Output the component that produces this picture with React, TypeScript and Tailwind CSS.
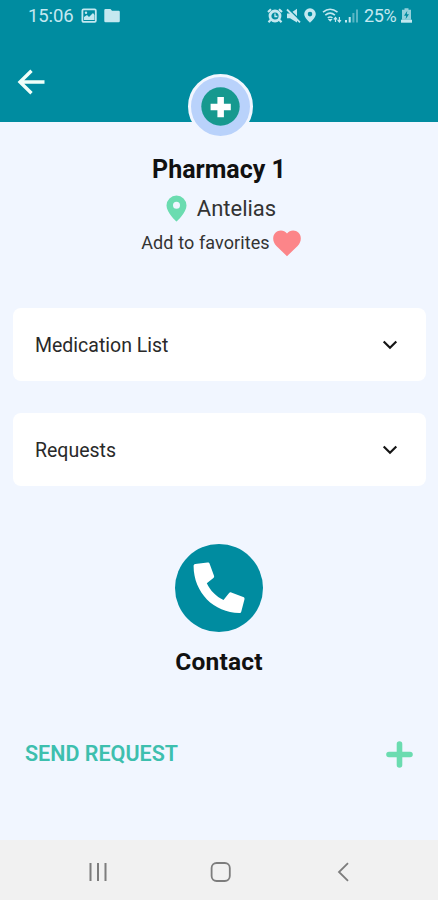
function StatusBar() {
  return (
    <div className="flex h-8 items-center pl-7 text-[#c4e8f0]">
      <span className="w-[53px] text-[18.5px] leading-8 tracking-[-0.1px]">15:06</span>
      <svg className="h-4 w-4" viewBox="0 0 16 16" fill="none">
        <rect x="1.4" y="1.3" width="13.4" height="12.6" rx="1.2" stroke="currentColor" strokeWidth="1.8" />
        <path d="M3 12V9l3-2 2 2 4-4 1.5 2v5z" fill="currentColor" />
        <circle cx="5" cy="4.8" r="1.2" fill="currentColor" />
      </svg>
      <svg className="ml-[7px] h-4 w-4" viewBox="0 0 16 16" fill="currentColor">
        <path d="M1.5 1h5L8 2.8h6.5A1.2 1.2 0 0 1 15.8 4v9a1.2 1.2 0 0 1-1.2 1.2H1.5A1.2 1.2 0 0 1 .3 13V2.2A1.2 1.2 0 0 1 1.5 1z" />
      </svg>

      <div className="ml-auto flex items-center pr-[26px]">
        {/* Alarm */}
        <svg className="h-4 w-4" viewBox="0 0 16 16" fill="none" stroke="currentColor">
          <path d="M1 4 4 1.3M15 4l-3-2.7" strokeWidth="2.2" />
          <circle cx="8" cy="8" r="5" strokeWidth="2.8" />
          <path d="M8 5.5v3h2.4" strokeWidth="1.3" />
          <path d="m4 11.5-2.5 2.7M12 11.5l2.5 2.7" strokeWidth="2.2" />
        </svg>
        {/* Muted */}
        <svg className="ml-[3px] h-4 w-[15px]" viewBox="0 0 15 16">
          <path d="M1 5.5h3L11 .8v13.8L4 10.3H1z" fill="currentColor" />
          <path d="m2.5 1 12 11.5" stroke="#008ca0" strokeWidth="1.5" />
          <path d="m1 1.5 13 12.8" stroke="currentColor" strokeWidth="1.8" />
        </svg>
        <svg className="ml-[3px] h-4 w-3" viewBox="0 0 12 16" fill="currentColor">
          <path
            fillRule="evenodd"
            d="M6 .3a5.8 5.8 0 0 0-5.8 5.8C.2 9.9 6 14.8 6 14.8s5.8-4.9 5.8-8.7A5.8 5.8 0 0 0 6 .3zm0 3.5a2.3 2.3 0 1 1 0 4.6A2.3 2.3 0 0 1 6 3.8z"
          />
        </svg>
        {/* Wifi */}
        <svg className="ml-[6px] h-4 w-5" viewBox="0 0 20 16" fill="none" stroke="currentColor">
          <path d="M1 4.2Q8 -1.6 15.5 4.2M3.3 7.2q4.8-4 9.6 0M5.8 10q2.3-2 4.7 0" strokeWidth="1.6" />
          <path d="m5.8 11 2.4 2.8 2.4-2.8z" fill="currentColor" stroke="none" />
          <path d="M13.5 14V9.5m-1.7 2 1.7-2 1.6 2M17.4 9v5m-1.7-2 1.7 2 1.6-2" strokeWidth="1.2" />
        </svg>
        <svg className="ml-[2px] h-4 w-[15px]" viewBox="0 0 15 16" fill="currentColor">
          <rect x="1" y="12" width="2" height="2.5" />
          <rect x="4.7" y="9" width="2" height="5.5" />
          <rect x="8.4" y="5" width="2" height="9.5" opacity=".45" />
          <rect x="12" y="1.5" width="2" height="13" opacity=".45" />
        </svg>
        <span className="ml-[5px] w-[34px] text-[18px] leading-8 tracking-[-0.4px]">25%</span>
        <svg className="ml-[3px] h-4 w-[11px]" viewBox="0 0 11 16">
          <path d="M3.5.3h4v1.4H10v10H1v-10h2.5z" fill="currentColor" opacity=".75" />
          <path d="M6.3 2.7 3 7.7h2.2l-.6 3.5L8 6.2H5.8z" fill="#008ca0" />
          <path d="M0 11.7h11v3H0z" fill="currentColor" />
        </svg>
      </div>
    </div>
  );
}

function PharmacyBadge() {
  return (
    <div className="absolute top-[74px] left-[188px] flex h-[65px] w-[65px] items-center justify-center rounded-full border-3 border-[#f1f6ff] bg-[#b9d2fb]">
      <svg className="h-[39px] w-[39px]" viewBox="0 0 39 39">
        <circle cx="19.5" cy="19.5" r="19.2" fill="#16998f" />
        <path d="M16.4 10h6.5v6.7h6.9v6.5h-6.9v7h-6.5v-7H9.6v-6.5h6.8z" fill="#fff" />
      </svg>
    </div>
  );
}

interface AccordionRowProps {
  title: string;
}

function AccordionRow({ title }: AccordionRowProps) {
  return (
    <button className="flex h-[73px] w-full items-center justify-between rounded-lg bg-white pr-[28px] pl-[22px]">
      <span className="pt-[3px] text-[19.5px] text-[#292929]">{title}</span>
      <svg className="h-4 w-4" viewBox="0 0 16 16" fill="none" stroke="#151515" strokeWidth="2.2">
        <path d="m1.7 4.5 6.3 6.2 6.3-6.2" />
      </svg>
    </button>
  );
}

function NavigationBar() {
  return (
    <div className="mt-auto flex h-[60px] items-center bg-[#f1f1f1] pt-[3px] pl-[88px]">
      <svg className="h-5 w-5" viewBox="0 0 20 20" stroke="#7d7d7d" strokeWidth="2">
        <path d="M2.5 1v18M10 1v18M17.5 1v18" />
      </svg>
      <svg className="ml-[102px] h-[22px] w-[22px]" viewBox="0 0 22 22" fill="none" stroke="#7d7d7d" strokeWidth="1.8">
        <rect x="1.6" y="2" width="18.2" height="18" rx="5" />
      </svg>
      <svg className="ml-[105px] h-5 w-3" viewBox="0 0 12 20" fill="none" stroke="#7d7d7d" strokeWidth="1.8">
        <path d="m11 1.2-9 8.8 9 8.8" />
      </svg>
    </div>
  );
}

export default function App() {
  return (
    <div className="relative flex h-[900px] w-[438px] flex-col overflow-hidden bg-[#f1f6ff] font-[Roboto,sans-serif]">
      {/* Header */}
      <div className="h-[122px] bg-[#008ca0]">
        <StatusBar />
        <svg className="mt-[37px] ml-[17px] h-[26px] w-7" viewBox="0 0 28 26" fill="none" stroke="#f0fff9" strokeWidth="3.4">
          <path d="M14.5 1.8 3 13l11.5 11.2M2.5 13h25" />
        </svg>
      </div>
      <PharmacyBadge />

      {/* Pharmacy details */}
      <div className="flex flex-col items-center pt-[31px]">
        <h1 className="text-[25px] leading-[34px] font-bold text-[#111]">Pharmacy 1</h1>
        <div className="flex h-[43px] items-center gap-[10px] pl-1">
          <svg className="h-[27px] w-[21px]" viewBox="0 0 21 27" fill="#6bdcb0">
            <path
              fillRule="evenodd"
              d="M10.5.5A10 10 0 0 0 .5 10.4C.5 17.5 10.5 26.5 10.5 26.5s10-9 10-16.1A10 10 0 0 0 10.5.5zm0 6.3a3.5 3.5 0 1 1 0 7 3.5 3.5 0 0 1 0-7z"
            />
          </svg>
          <span className="text-[22px] text-[#333]">Antelias</span>
        </div>
        <div className="flex h-6 items-center gap-[3px] pl-1">
          <span className="text-[18px] tracking-[0.1px] text-[#333]">Add to favorites</span>
          <svg className="mt-0.5 h-[27px] w-7" viewBox="0 0 28 27" fill="#fc8589">
            <path d="M14 26.2 3.4 15.9C-.8 11.6-.6 5.9 2.4 2.8 5.9-.7 11.2-.1 14 3.4c2.8-3.5 8.100-4.100 11.600-.6 3 3.100 3.200 8.800-1 13.100z" />
          </svg>
        </div>
      </div>

      {/* Accordions */}
      <div className="mt-[54px] flex flex-col gap-8 pr-3 pl-[13px]">
        <AccordionRow title="Medication List" />
        <AccordionRow title="Requests" />
      </div>

      {/* Contact */}
      <div className="mt-[58px] flex flex-col items-center">
        <button className="flex h-[88px] w-[88px] items-center justify-center rounded-full bg-[#008ca0]">
          <svg className="h-[52px] w-[52px]" viewBox="0 0 52 52" fill="#fff">
            <path d="M2.200 2 14.500.6c1.200-.1 1.800.3 2.200 1.300l4.300 11.800c.3 1 .1 1.700-.6 2.300l-6.600 5.200c3.600 7.500 9.200 13.100 16.700 16.700l5.600-6.900c.6-.7 1.300-.9 2.200-.6l11.900 4.600c1 .4 1.500 1.100 1.300 2.200l-3.200 12.300c-.3 1-.8 1.500-1.900 1.500C21 51 .6 30.600.6 4.100c0-1.200.5-2 1.600-2.100z" />
          </svg>
        </button>
        <span className="mt-[13px] text-[24.500px] leading-[34px] font-bold tracking-[0.2px] text-[#111]">Contact</span>
      </div>

      {/* Send request */}
      <button className="mt-[59px] flex h-[32px] items-center justify-between px-[25px]">
        <span className="text-[21.5px] font-semibold text-[#3dbfae]">SEND REQUEST</span>
        <svg className="h-[27px] w-[27px]" viewBox="0 0 27 27" stroke="#6bdcb0" strokeWidth="5.6" strokeLinecap="round">
          <path d="M13.5 3v21M3 13.5h21" />
        </svg>
      </button>

      <NavigationBar />
    </div>
  );
}
